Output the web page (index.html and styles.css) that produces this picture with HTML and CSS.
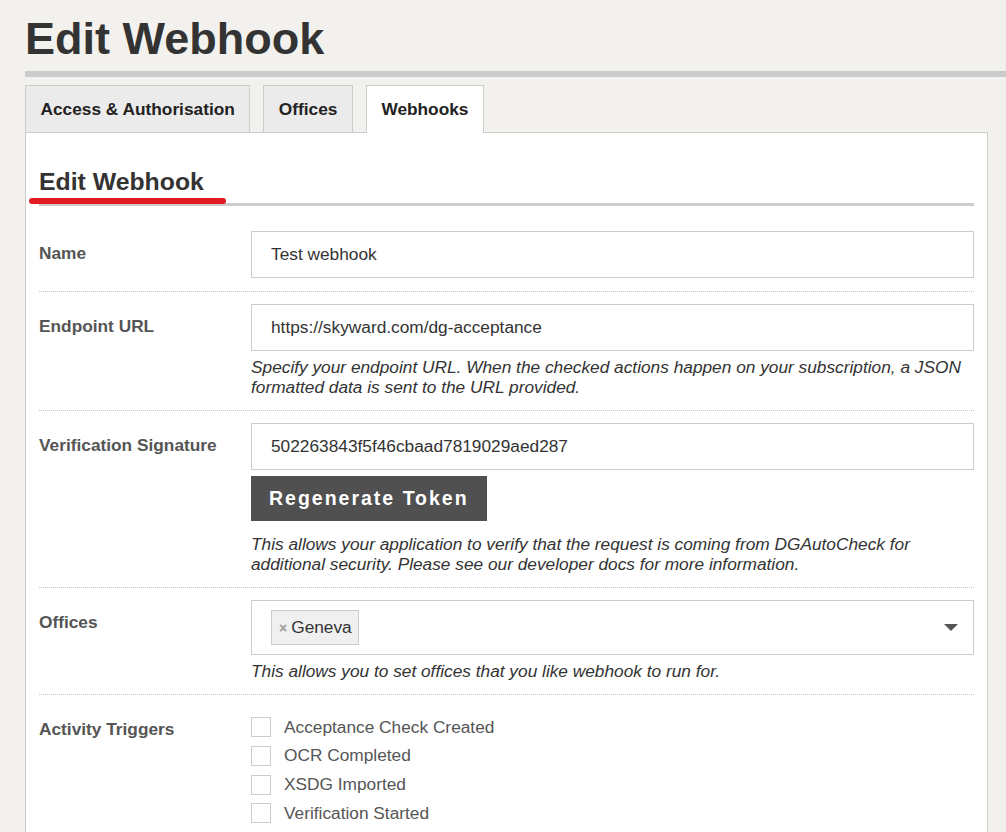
FILE: index.html
```html
<!DOCTYPE html>
<html lang="en">
<head>
<meta charset="utf-8">
<title>Edit Webhook</title>
<link rel="stylesheet" href="styles.css">
</head>
<body>
<div class="page">
  <h1 class="page-title">Edit Webhook</h1>
  <nav class="tabs">
    <a class="tab">Access &amp; Authorisation</a>
    <a class="tab">Offices</a>
    <a class="tab active">Webhooks</a>
  </nav>
  <div class="panel">
    <h2 class="section-title">Edit Webhook</h2>
    <form class="form">
      <div class="row">
        <label class="label">Name</label>
        <div class="field">
          <input class="text-input" type="text" value="Test webhook">
        </div>
      </div>
      <div class="row">
        <label class="label">Endpoint URL</label>
        <div class="field">
          <input class="text-input" type="text" value="https://skyward.com/dg-acceptance">
          <p class="help">Specify your endpoint URL. When the checked actions happen on your subscription, a JSON formatted data is sent to the URL provided.</p>
        </div>
      </div>
      <div class="row">
        <label class="label">Verification Signature</label>
        <div class="field">
          <input class="text-input" type="text" value="502263843f5f46cbaad7819029aed287">
          <button class="btn" type="button">Regenerate Token</button>
          <p class="help">This allows your application to verify that the request is coming from DGAutoCheck for additional security. Please see our <a class="help-link">developer docs</a> for more information.</p>
        </div>
      </div>
      <div class="row">
        <label class="label">Offices</label>
        <div class="field">
          <div class="select">
            <span class="tag"><span class="tag-x">×</span>Geneva</span>
            <span class="caret"></span>
          </div>
          <p class="help">This allows you to set offices that you like webhook to run for.</p>
        </div>
      </div>
      <div class="row last">
        <label class="label">Activity Triggers</label>
        <div class="field">
          <ul class="checks">
            <li class="check"><input type="checkbox"><span>Acceptance Check Created</span></li>
            <li class="check"><input type="checkbox"><span>OCR Completed</span></li>
            <li class="check"><input type="checkbox"><span>XSDG Imported</span></li>
            <li class="check"><input type="checkbox"><span>Verification Started</span></li>
          </ul>
        </div>
      </div>
    </form>
  </div>
</div>
</body>
</html>
```
FILE: styles.css
```css
body {
  margin: 0;
  background: #f2f1ed;
  font-family: "Liberation Sans", Arial, sans-serif;
  color: #333;
}

.page {
  padding: 15px 0 0 25px;
}

.page-title {
  margin: 0;
  font-size: 45px;
  line-height: 48px;
  font-weight: bold;
  color: #333;
  padding-bottom: 8px;
  border-bottom: 6px solid #cbcbcb;
}

.tabs {
  display: flex;
  align-items: flex-start;
  gap: 13px;
  margin-top: 8px;
}

.tab {
  display: block;
  height: 46px;
  line-height: 46px;
  padding: 0 14.5px;
  border: 1px solid #ccc;
  border-bottom: 0;
  background: #ebebeb;
  font-size: 17.3px;
  font-weight: bold;
  color: #222;
}

.tab.active {
  background: #fff;
  height: 47px;
  margin-bottom: -1px;
  position: relative;
  z-index: 1;
}

.panel {
  background: #fff;
  border: 1px solid #ccc;
  margin-right: 18px;
  padding: 34px 13px 60px;
}

.section-title {
  margin: 0;
  font-size: 24.8px;
  line-height: 30px;
  font-weight: bold;
  color: #333;
  padding-bottom: 6px;
  border-bottom: 3px solid #ccc;
  position: relative;
}

.section-title::after {
  content: "";
  position: absolute;
  left: -10px;
  bottom: -1px;
  width: 197px;
  height: 6px;
  border-radius: 3px;
  background: #e31b23;
}

.form {
  margin-top: 13px;
}

.row {
  display: grid;
  grid-template-columns: 212px 1fr;
  padding: 12px 0 13px;
  border-bottom: 1px dotted #c4c4c4;
}

.row.last {
  border-bottom: 0;
}

.label {
  display: block;
  margin-top: 12px;
  font-size: 17.3px;
  line-height: 20px;
  font-weight: bold;
  color: #555;
}

.field {
  min-width: 0;
}

.text-input {
  display: block;
  width: 100%;
  box-sizing: border-box;
  height: 47px;
  margin: 0;
  padding: 0 19px;
  border: 1px solid #ccc;
  border-radius: 0;
  background: #fff;
  font-family: "Liberation Sans", Arial, sans-serif;
  font-size: 17.3px;
  color: #333;
  outline: none;
}

.help {
  margin: 6px 0 0;
  font-size: 17.3px;
  line-height: 20px;
  font-style: italic;
  color: #333;
}

.help-link {
  color: #333;
  text-decoration: none;
}

.btn {
  display: block;
  width: max-content;
  height: 45px;
  margin: 6px 0 13px;
  padding: 0 18px;
  border: 0;
  border-radius: 0;
  background: #505050;
  color: #fff;
  font-family: "Liberation Sans", Arial, sans-serif;
  font-size: 19.5px;
  font-weight: bold;
  letter-spacing: 2px;
}

.select {
  display: flex;
  align-items: center;
  justify-content: space-between;
  box-sizing: border-box;
  height: 55px;
  padding: 9px 15px 9px 19px;
  border: 1px solid #ccc;
  background: #fff;
}

.tag {
  display: flex;
  align-items: center;
  box-sizing: border-box;
  height: 35px;
  padding: 0 6px 0 7px;
  border: 1px solid #ccc;
  background: #f0f0f0;
  font-size: 17.3px;
  color: #333;
}

.tag-x {
  font-size: 14px;
  font-weight: bold;
  color: #999;
  margin-right: 4px;
}

.caret {
  width: 0;
  height: 0;
  border-left: 7px solid transparent;
  border-right: 7px solid transparent;
  border-top: 7px solid #555;
}

.checks {
  list-style: none;
  margin: 6px 0 0;
  padding: 0;
}

.check {
  display: flex;
  align-items: center;
  height: 28.67px;
  font-size: 17.3px;
  color: #555;
}

.check input {
  appearance: none;
  -webkit-appearance: none;
  margin: 0 13px 0 0;
  width: 20px;
  height: 20px;
  box-sizing: border-box;
  border: 1px solid #ccc;
  border-radius: 0;
  background: #fff;
}
```
